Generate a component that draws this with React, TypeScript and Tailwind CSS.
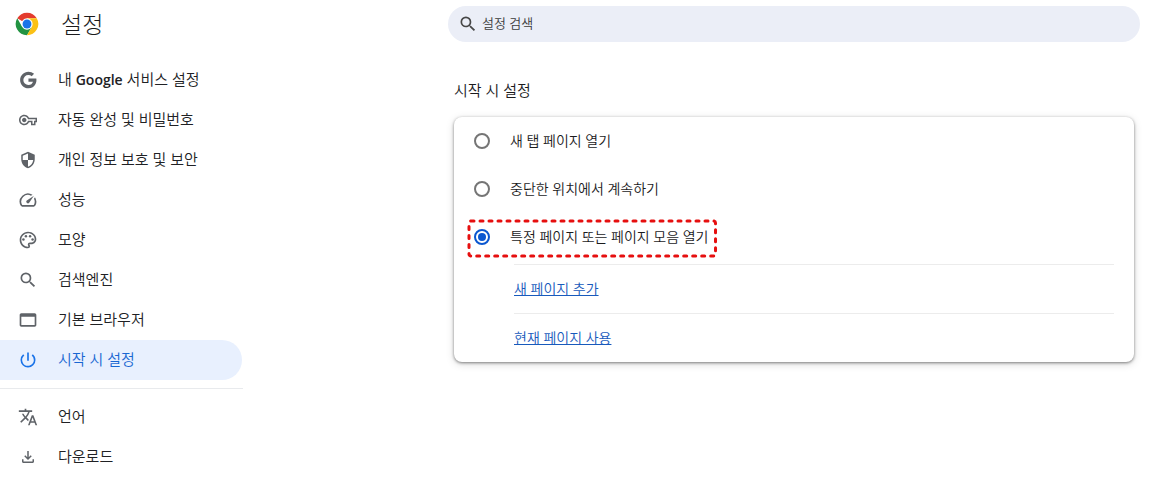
import { useState } from "react";
import type { ReactNode } from "react";

type MenuItem = { id: string; label: ReactNode; icon: ReactNode };

function Icon({ d, className = "size-[18px]" }: { d: string; className?: string }) {
  return (
    <svg viewBox="0 0 24 24" fill="currentColor" className={className} aria-hidden="true">
      <path d={d} />
    </svg>
  );
}

const SEARCH_PATH =
  "M15.5 14h-.79l-.28-.27A6.471 6.471 0 0 0 16 9.5 6.5 6.5 0 1 0 9.5 16c1.61 0 3.09-.59 4.23-1.57l.27.28v.79l5 4.99L20.49 19l-4.99-5zm-6 0C7.01 14 5 11.99 5 9.5S7.01 5 9.5 5 14 7.01 14 9.5 11.99 14 9.5 14z";

const mainItems: MenuItem[] = [
  {
    id: "google",
    label: (
      <>
        내 <span className="text-sm font-semibold">Google</span> 서비스 설정
      </>
    ),
    icon: (
      <Icon
        className="size-5"
        d="M12.545 10.239v3.821h5.445c-.712 2.315-2.647 3.972-5.445 3.972a6.033 6.033 0 1 1 0-12.064c1.498 0 2.866.549 3.921 1.453l2.814-2.814A9.969 9.969 0 0 0 12.545 2C7.021 2 2.543 6.477 2.543 12s4.478 10 10.002 10c8.396 0 10.249-7.85 9.426-11.748l-9.426-.013z"
      />
    ),
  },
  {
    id: "autofill",
    label: "자동 완성 및 비밀번호",
    icon: (
      <Icon d="M22 19h-6v-4h-2.68c-1.14 2.42-3.6 4-6.32 4-3.86 0-7-3.14-7-7s3.14-7 7-7c2.72 0 5.17 1.58 6.32 4H24v6h-2v4zm-4-2h2v-4h2v-2H11.94l-.23-.67C11.01 8.34 9.11 7 7 7c-2.76 0-5 2.24-5 5s2.24 5 5 5c2.11 0 4.01-1.34 4.71-3.33l.23-.67H18v4zM7 15c-1.65 0-3-1.35-3-3s1.35-3 3-3 3 1.35 3 3-1.35 3-3 3z" />
    ),
  },
  {
    id: "privacy",
    label: "개인 정보 보호 및 보안",
    icon: (
      <Icon d="M12 1 3 5v6c0 5.55 3.84 10.74 9 12 5.16-1.26 9-6.45 9-12V5l-9-4zm0 10.99h7c-.53 4.12-3.28 7.79-7 8.94V12H5V6.3l7-3.11v8.8z" />
    ),
  },
  {
    id: "performance",
    label: "성능",
    icon: (
      <Icon
        className="size-5"
        d="m20.38 8.57-1.23 1.85a8 8 0 0 1-.22 7.58H5.07A8 8 0 0 1 15.58 6.85l1.85-1.23A10 10 0 0 0 3.35 19a2 2 0 0 0 1.72 1h13.85a2 2 0 0 0 1.74-1 10 10 0 0 0-.27-10.44zm-9.79 6.84a2 2 0 0 0 2.83 0l5.66-8.49-8.49 5.66a2 2 0 0 0 0 2.83z"
      />
    ),
  },
  {
    id: "appearance",
    label: "모양",
    icon: (
      <svg viewBox="0 0 24 24" className="size-5" fill="currentColor" aria-hidden="true">
        <path d="M12 22C6.49 22 2 17.51 2 12S6.49 2 12 2s10 4.04 10 9c0 3.31-2.69 6-6 6h-1.77c-.28 0-.5.22-.5.5 0 .12.05.23.13.33.41.47.64 1.06.64 1.67A2.5 2.5 0 0 1 12 22zm0-18c-4.41 0-8 3.59-8 8s3.59 8 8 8c.28 0 .5-.22.5-.5a.54.54 0 0 0-.14-.35c-.41-.46-.63-1.05-.63-1.65a2.5 2.5 0 0 1 2.5-2.5H16c2.21 0 4-1.79 4-4 0-3.86-3.59-7-8-7z" />
        <circle cx="6.5" cy="11.5" r="1.5" />
        <circle cx="9.5" cy="7.5" r="1.5" />
        <circle cx="14.5" cy="7.5" r="1.5" />
        <circle cx="17.5" cy="11.5" r="1.5" />
      </svg>
    ),
  },
  { id: "search", label: "검색엔진", icon: <Icon className="size-5" d={SEARCH_PATH} /> },
  {
    id: "browser",
    label: "기본 브라우저",
    icon: (
      <Icon
        className="size-5"
        d="M20 4H4c-1.1 0-2 .9-2 2v12c0 1.1.9 2 2 2h16c1.1 0 2-.9 2-2V6c0-1.1-.9-2-2-2zm0 14H4V8h16v10z"
      />
    ),
  },
  {
    id: "startup",
    label: "시작 시 설정",
    icon: (
      <Icon
        className="size-5"
        d="M13 3h-2v10h2V3zm4.83 2.17-1.42 1.42A6.92 6.92 0 0 1 19 12c0 3.87-3.13 7-7 7A6.995 6.995 0 0 1 7.58 6.58L6.17 5.17A8.932 8.932 0 0 0 3 12a9 9 0 0 0 18 0c0-2.74-1.23-5.18-3.17-6.83z"
      />
    ),
  },
];

const extraItems: MenuItem[] = [
  {
    id: "languages",
    label: "언어",
    icon: (
      <Icon
        className="size-5"
        d="m12.87 15.07-2.54-2.51.03-.03A17.52 17.52 0 0 0 14.07 6H17V4h-7V2H8v2H1v1.99h11.17C11.5 7.92 10.44 9.75 9 11.35 8.07 10.32 7.3 9.19 6.69 8h-2c.73 1.63 1.73 3.17 2.98 4.56l-5.09 5.02L4 19l5-5 3.11 3.11.76-2.04zM18.5 10h-2L12 22h2l1.12-3h4.75L21 22h2l-4.5-12zm-2.62 7 1.62-4.33L19.12 17h-3.24z"
      />
    ),
  },
  {
    id: "downloads",
    label: "다운로드",
    icon: (
      <Icon d="M18 15v3H6v-3H4v3c0 1.1.9 2 2 2h12c1.1 0 2-.9 2-2v-3h-2zm-1-4-1.41-1.41L13 12.17V4h-2v8.17L8.41 9.59 7 11l5 5 5-5z" />
    ),
  },
];

const startupOptions = [
  { value: "newtab", label: "새 탭 페이지 열기" },
  { value: "continue", label: "중단한 위치에서 계속하기" },
  { value: "specific", label: "특정 페이지 또는 페이지 모음 열기" },
];

function ChromeLogo() {
  return (
    <svg viewBox="0 0 48 48" className="size-6 shrink-0" aria-hidden="true">
      <circle cx="24" cy="24" r="22.5" fill="#fff" />
      <path d="M24 24 4.5 12.7A22.5 22.5 0 0 1 43.5 12.7H24z" fill="#e33b2e" />
      <path d="M14.2 29.6 4.5 12.7A22.5 22.5 0 0 0 24 46.5L33.8 29.6 24 24z" fill="#229342" />
      <path d="M33.8 29.6 24 46.5A22.5 22.5 0 0 0 43.5 12.7H24V24z" fill="#fbc116" />
      <circle cx="24" cy="24" r="11.3" fill="#fff" />
      <circle cx="24" cy="24" r="8.9" fill="#1a73e8" />
    </svg>
  );
}

function MenuLink({ item, active, onSelect }: { item: MenuItem; active: boolean; onSelect: () => void }) {
  return (
    <a
      href={`#${item.id}`}
      onClick={onSelect}
      aria-current={active ? "page" : undefined}
      className={`mr-px flex h-10 items-center gap-5 rounded-r-full pl-[18px] text-[15px] ${
        active ? "bg-[#e8f0fe] text-[#1967d2]" : "text-[#202124]"
      }`}
    >
      <span className={`flex size-5 items-center justify-center ${active ? "text-[#1a73e8]" : "text-[#5f6368]"}`}>
        {item.icon}
      </span>
      <span className="pb-0.5">{item.label}</span>
    </a>
  );
}

export default function App() {
  const [section, setSection] = useState("startup");
  const [startup, setStartup] = useState("specific");
  const [query, setQuery] = useState("");

  return (
    <div className="flex min-h-screen bg-white font-['Open_Sans','Noto_Sans_CJK_KR',sans-serif] font-[350] text-[#1b1b1d]">
      {/* Sidebar */}
      <aside className="w-[243px] shrink-0">
        <header className="flex h-12 items-center gap-[22px] pl-[15px]">
          <ChromeLogo />
          <h1 className="text-[23px] leading-8 font-light">설정</h1>
        </header>
        <nav className="pt-3">
          {mainItems.map((item) => (
            <MenuLink key={item.id} item={item} active={section === item.id} onSelect={() => setSection(item.id)} />
          ))}
          <hr className="my-2 border-[#e8eaed]" />
          {extraItems.map((item) => (
            <MenuLink key={item.id} item={item} active={section === item.id} onSelect={() => setSection(item.id)} />
          ))}
        </nav>
      </aside>

      {/* Content */}
      <main className="min-w-0 flex-1 pt-1.5 pr-[27px] pl-[205px]">
        <label className="flex h-9 items-center gap-1 rounded-full bg-[#ebeef7] px-2.5 text-[#474747]">
          <Icon className="size-5 shrink-0" d={SEARCH_PATH} />
          <input
            type="text"
            aria-label="설정 검색"
            placeholder="설정 검색"
            value={query}
            onChange={(e) => setQuery(e.target.value)}
            className="min-w-0 flex-1 bg-transparent text-[13px] outline-none placeholder:text-[#3c3c3c]"
          />
        </label>

        <section className="px-1.5 pt-9">
          <h2 className="text-[15px] leading-6 font-[350]">시작 시 설정</h2>
          <div className="mt-[15px] rounded-lg bg-white text-sm shadow-[0_1px_3px_rgba(0,0,0,0.45),0_2px_8px_rgba(0,0,0,0.15)]">
            <div role="radiogroup" aria-label="시작 시 설정" className="pb-[3px]">
              {startupOptions.map((option) => (
                <div key={option.value} className="flex h-12 items-center pl-5">
                  <label className="relative flex items-center gap-5">
                    <input
                      type="radio"
                      name="startup"
                      value={option.value}
                      checked={startup === option.value}
                      onChange={() => setStartup(option.value)}
                      className="flex size-4 appearance-none items-center justify-center rounded-full border-2 border-[#757575] before:size-2 before:rounded-full checked:border-[#0b57d0] checked:before:bg-[#0b57d0]"
                    />
                    <span>{option.label}</span>
                    {option.value === "specific" && (
                      <svg className="pointer-events-none absolute -top-1.5 -left-[5px] h-[calc(100%+15px)] w-[calc(100%+12px)] overflow-visible">
                        <rect
                          width="100%"
                          height="100%"
                          rx="2"
                          fill="none"
                          stroke="#e60f0f"
                          strokeWidth="3"
                          strokeLinecap="round"
                          strokeDasharray="3 6"
                        />
                      </svg>
                    )}
                  </label>
                </div>
              ))}
            </div>
            <div className="pr-5 pl-15">
              {["새 페이지 추가", "현재 페이지 사용"].map((text) => (
                <div key={text} className="flex h-[49px] items-center border-t border-[#ececec]">
                  <a href="#startup" className="text-[#185abc] underline">
                    {text}
                  </a>
                </div>
              ))}
            </div>
          </div>
        </section>
      </main>
    </div>
  );
}
